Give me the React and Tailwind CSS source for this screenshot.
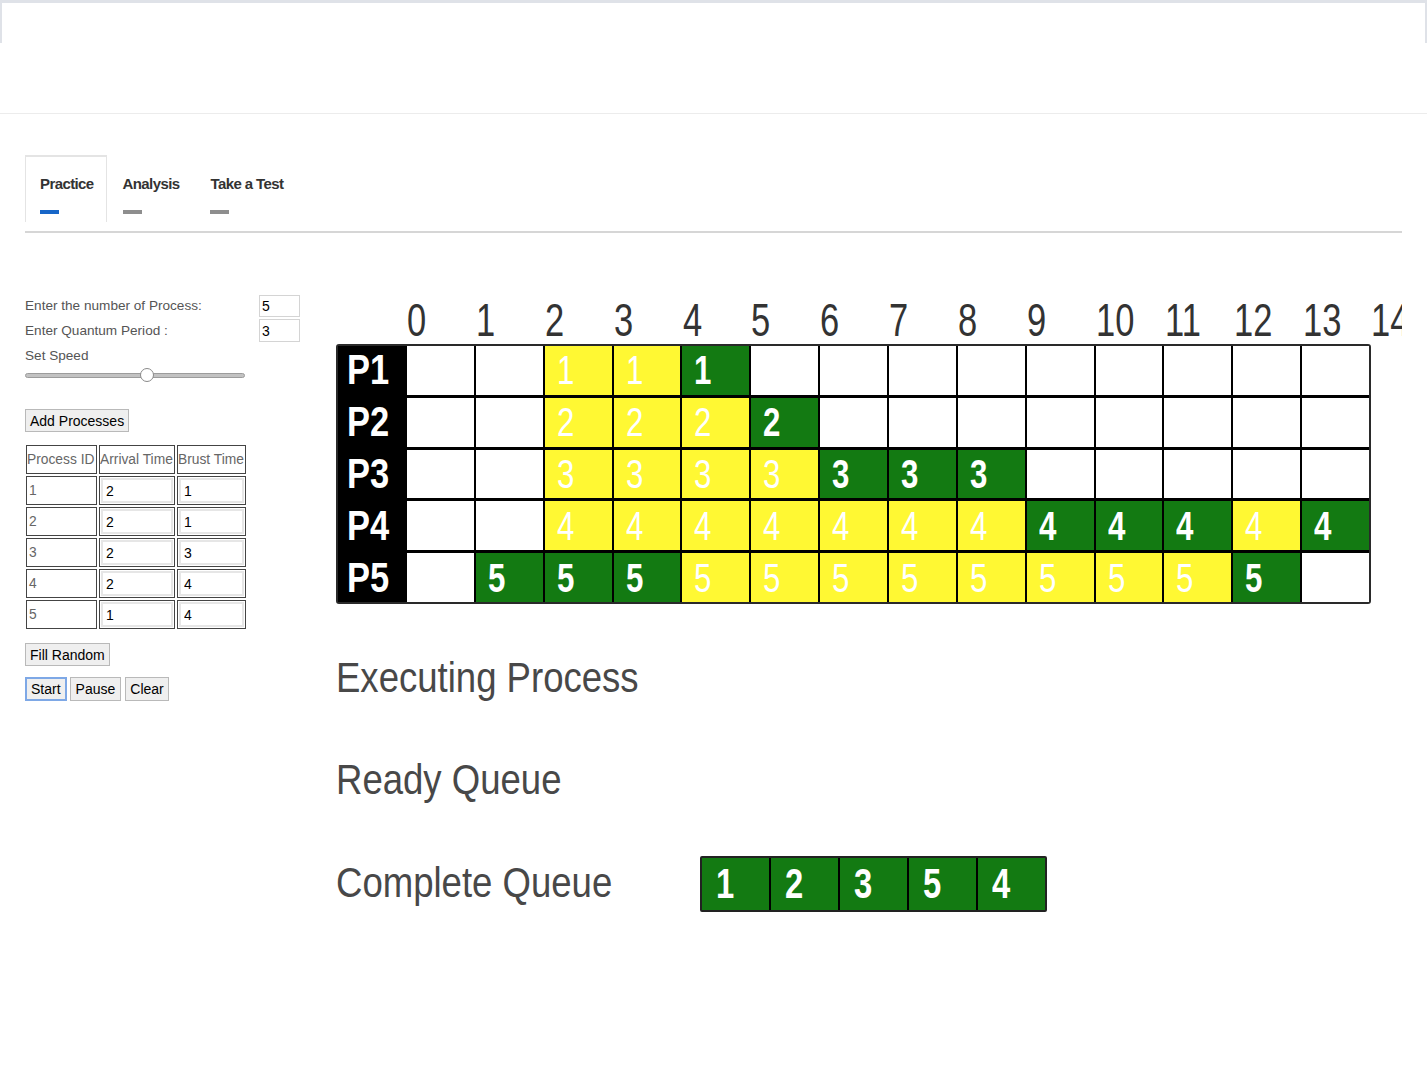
const rows = [
  { id: 'P1', n: '1', cells: '..yyg.........' },
  { id: 'P2', n: '2', cells: '..yyyg........' },
  { id: 'P3', n: '3', cells: '..yyyyggg.....' },
  { id: 'P4', n: '4', cells: '..yyyyyyygggyg' },
  { id: 'P5', n: '5', cells: '.gggyyyyyyyyg.' },
];

const processes = [
  { id: 1, arrival: 2, burst: 1 },
  { id: 2, arrival: 2, burst: 1 },
  { id: 3, arrival: 2, burst: 3 },
  { id: 4, arrival: 2, burst: 4 },
  { id: 5, arrival: 1, burst: 4 },
];

const completed = ['1', '2', '3', '5', '4'];

const btn =
  'h-[23px] px-[4px] bg-[#efefef] border border-[#b9b9b9] text-[14px] leading-none text-black';

const Cell = ({ kind, n }) => {
  if (kind === '.') return <div className="bg-white" />;
  const green = kind === 'g';
  return (
    <div
      className={`flex items-center pl-[12px] text-white text-[40px] leading-none ${
        green ? 'bg-[#137a12] font-bold' : 'bg-[#fff833]'
      }`}
    >
      <span className="inline-block scale-x-[0.78] origin-left">{n}</span>
    </div>
  );
};

const GanttChart = () => (
  <div>
    <div className="flex h-[49px] pt-[2px] text-[46px] leading-none text-[#333]">
      <div className="w-[71px] shrink-0" />
      {Array.from({ length: 15 }, (_, i) => (
        <div key={i} className="w-[68.9px] shrink-0 whitespace-nowrap">
          <span className="inline-block scale-x-[0.75] origin-left">{i}</span>
        </div>
      ))}
    </div>
    <div className="w-[1035px] flex flex-col gap-y-[3px] bg-black border-2 border-[#2a2a2a] rounded-[3px]">
      {rows.map((r) => (
        <div
          key={r.id}
          className="h-[48.8px] grid grid-cols-[67px_repeat(14,minmax(0,1fr))] gap-x-[2px]"
        >
          <div className="bg-black flex items-center pl-[9px] text-white font-bold text-[42px] leading-none">
            <span className="inline-block scale-x-[0.82] origin-left">{r.id}</span>
          </div>
          {r.cells.split('').map((c, i) => (
            <Cell key={i} kind={c} n={r.n} />
          ))}
        </div>
      ))}
    </div>
  </div>
);

const QueueRow = ({ label, children }) => (
  <div className="h-[56px] flex items-center">
    <div className="w-[364px] shrink-0 pb-[2px] text-[42px] leading-none text-[#484848] whitespace-nowrap">
      <span className="inline-block scale-x-[0.87] origin-left">{label}</span>
    </div>
    {children}
  </div>
);

const th =
  'h-[29px] border border-[#444] px-0 font-normal text-left text-[#666] whitespace-nowrap';

export default function App() {
  return (
    <div className="min-h-screen bg-white font-['Liberation_Sans',Arial,sans-serif]">
      <div className="h-[43px] border-t-[3px] border-x-2 border-[#dfe2e8]" />
      <div className="h-[71px] border-b border-[#ececec]" />

      <div className="px-[25px] pt-[41px]">
        <nav className="flex items-start h-[78px] border-b-2 border-[#d6d6d6]">
          <div className="h-[67px] pl-[14px] pr-[12px] pt-[19px] border-x border-t-2 border-[#e4e4e4]">
            <div className="text-[15px] font-bold text-[#333] tracking-[-0.6px] leading-none">Practice</div>
            <div className="mt-[19px] w-[19px] h-[4px] bg-[#1766c8]" />
          </div>
          <div className="h-[67px] pl-[16px] pr-[16px] pt-[21px]">
            <div className="text-[15px] font-bold text-[#333] tracking-[-0.6px] leading-none">Analysis</div>
            <div className="mt-[19px] w-[19px] h-[4px] bg-[#8e8e8e]" />
          </div>
          <div className="h-[67px] pl-[15px] pt-[21px]">
            <div className="text-[15px] font-bold text-[#333] tracking-[-0.6px] leading-none">Take a Test</div>
            <div className="mt-[19px] w-[19px] h-[4px] bg-[#8e8e8e]" />
          </div>
        </nav>

        <main className="flex pt-[62px]">
          <section className="w-[275px] shrink-0 text-[13.6px] leading-[20px] text-[#555]">
            <div className="flex items-center justify-between h-[22px]">
              <span>Enter the number of Process:</span>
              <input
                defaultValue="5"
                className="w-[41px] h-[22px] border border-[#d4d4d4] pl-[2px] text-black text-[14px]"
              />
            </div>
            <div className="flex items-center justify-between h-[23px] mt-[2px]">
              <span>Enter Quantum Period :</span>
              <input
                defaultValue="3"
                className="w-[41px] h-[23px] border border-[#d4d4d4] pl-[2px] text-black text-[14px]"
              />
            </div>
            <div className="mt-[4px]">Set Speed</div>
            <div className="relative mt-[2px] w-[220px] h-[14px] flex items-center">
              <div className="w-full h-[5px] rounded-full bg-[#c2c2c2] border border-[#9c9c9c]" />
              <div className="absolute left-[115px] top-0 w-[14px] h-[14px] rounded-full bg-white border border-[#8a8a8a]" />
            </div>

            <button className={`${btn} mt-[27px]`}>Add Processes</button>

            <table className="mt-[11px] -ml-[1px] border-separate border-spacing-[2px] text-[13.8px]">
              <thead>
                <tr>
                  <th className={`${th} w-[71px]`}>Process ID</th>
                  <th className={`${th} w-[76px]`}>Arrival Time</th>
                  <th className={`${th} w-[69px]`}>Brust Time</th>
                </tr>
              </thead>
              <tbody>
                {processes.map((p) => (
                  <tr key={p.id}>
                    <td className="h-[29px] border border-[#444] pl-[2px] text-[#666]">{p.id}</td>
                    <td className="h-[29px] border border-[#444] p-[1px]">
                      <input
                        defaultValue={p.arrival}
                        className="w-full h-[25px] border-2 border-[#e6e6e6] pl-[3px] text-black text-[14px]"
                      />
                    </td>
                    <td className="h-[29px] border border-[#444] p-[1px]">
                      <input
                        defaultValue={p.burst}
                        className="w-full h-[25px] border-2 border-[#e6e6e6] pl-[3px] text-black text-[14px]"
                      />
                    </td>
                  </tr>
                ))}
              </tbody>
            </table>

            <button className={`${btn} mt-[12px] block`}>Fill Random</button>
            <div className="flex mt-[11px]">
              <button className="h-[24px] px-[4px] bg-[#efefef] border-2 border-[#7ea8e6] text-[14px] leading-none text-black">
                Start
              </button>
              <button className={`${btn} h-[24px] px-[5px] ml-[3px]`}>Pause</button>
              <button className={`${btn} h-[24px] ml-[4px]`}>Clear</button>
            </div>
          </section>

          <section className="flex-1 ml-[36px] overflow-hidden">
            <GanttChart />

            <div className="mt-[47px] flex flex-col gap-y-[46.5px]">
              <QueueRow label="Executing Process" />
              <QueueRow label="Ready Queue" />
              <QueueRow label="Complete Queue">
                <div className="flex gap-x-[2px] h-[56px] bg-black border-2 border-[#222] rounded-[2px]">
                  {completed.map((n) => (
                    <div
                      key={n}
                      className="w-[67px] bg-[#137a12] flex items-center pl-[14px] text-white font-bold text-[42px] leading-none"
                    >
                      <span className="inline-block scale-x-[0.78] origin-left">{n}</span>
                    </div>
                  ))}
                </div>
              </QueueRow>
            </div>
          </section>
        </main>
      </div>
    </div>
  );
}
